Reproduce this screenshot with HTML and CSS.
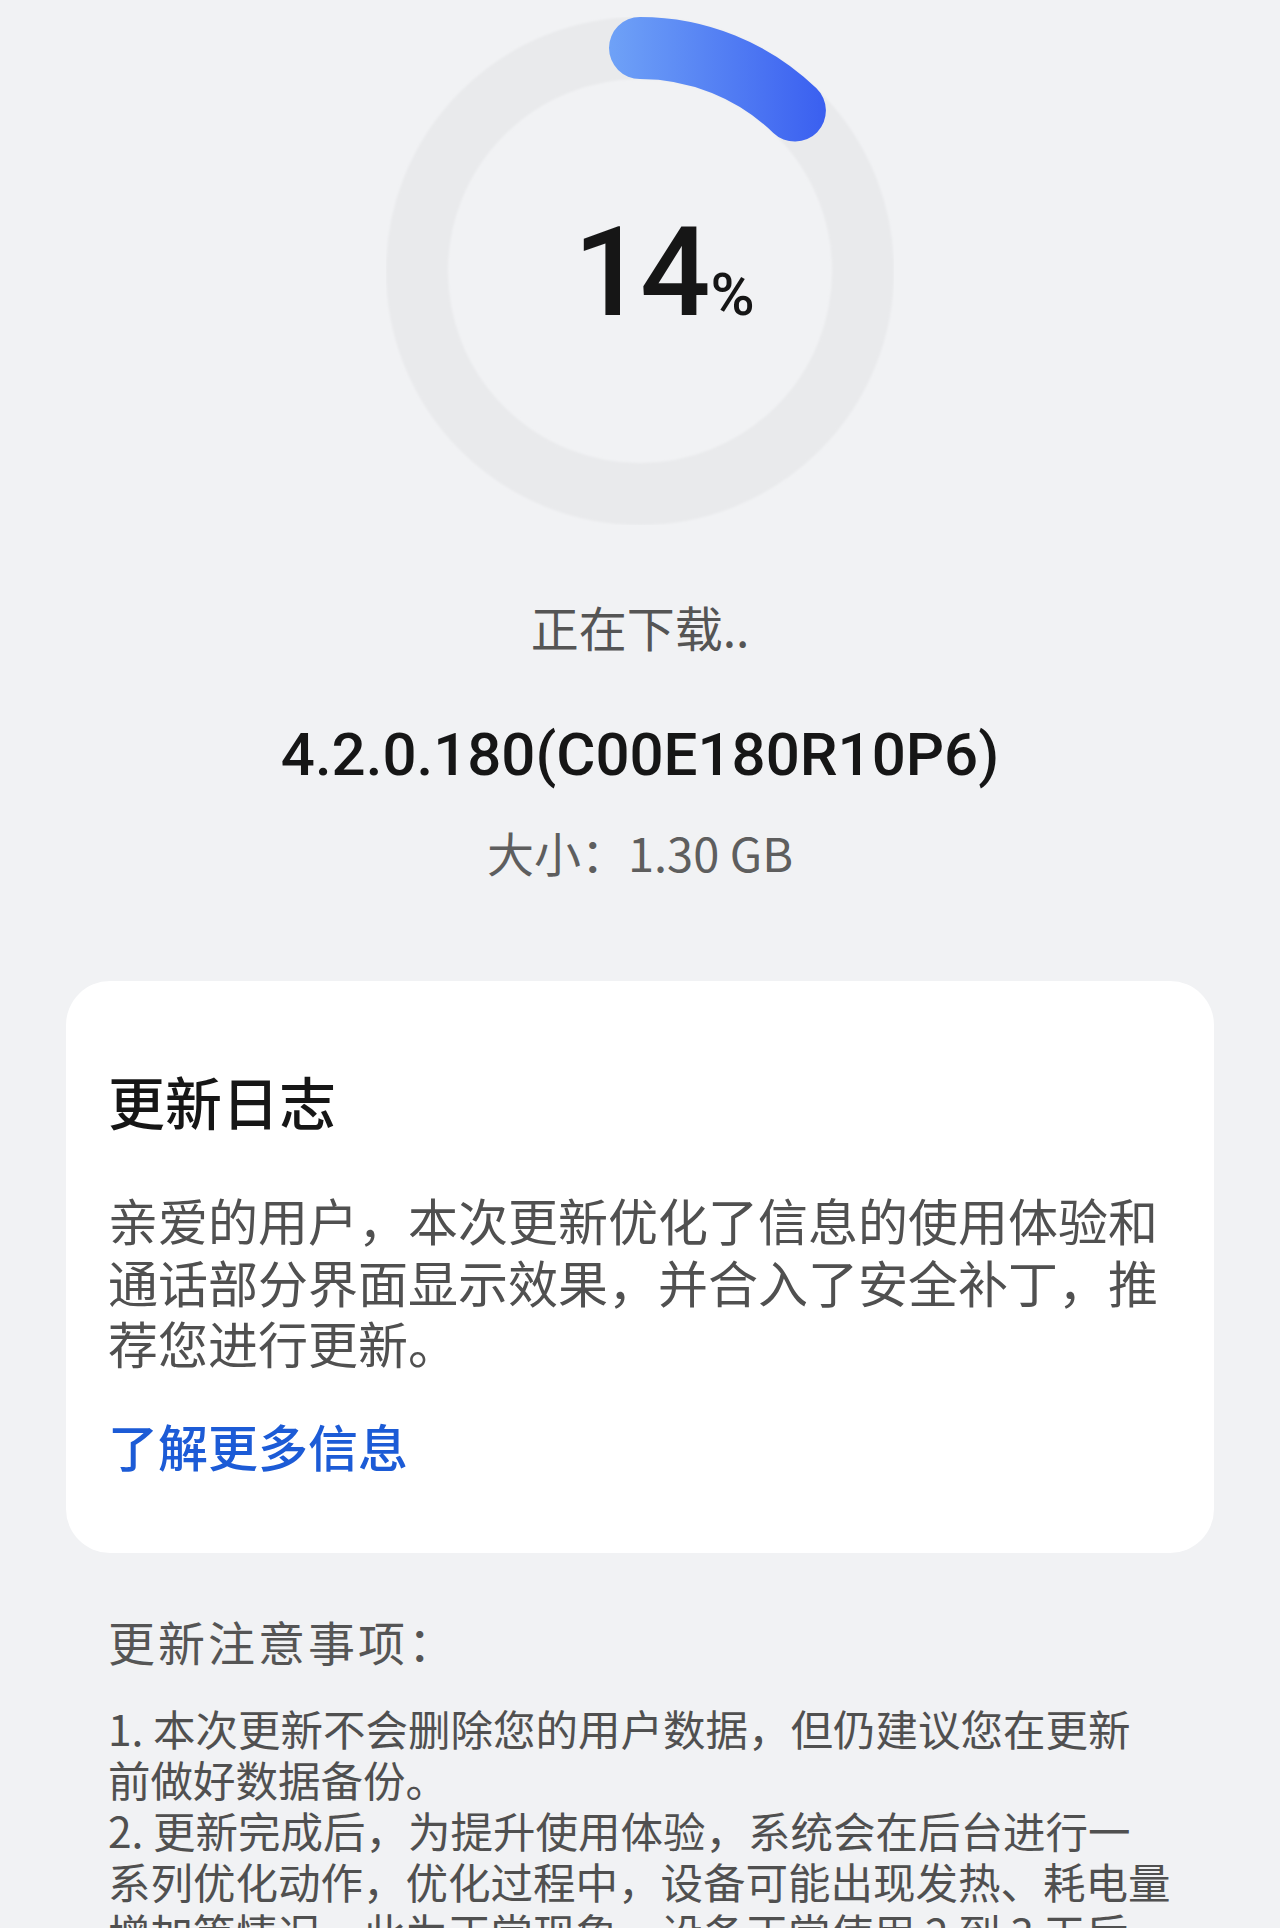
FILE: index.html
```html
<!DOCTYPE html>
<html lang="zh-CN">
<head>
<meta charset="utf-8">
<title>软件更新</title>
<link rel="stylesheet" href="styles.css">
</head>
<body>
<main class="page">
  <section class="progress">
    <svg class="progress-ring" viewBox="0 0 508 508" width="508" height="508" aria-hidden="true">
      <defs>
        <linearGradient id="arcGrad" gradientUnits="userSpaceOnUse" x1="222" y1="0" x2="440" y2="0">
          <stop offset="0" stop-color="#6fa2f7"/>
          <stop offset="1" stop-color="#3a5ff0"/>
        </linearGradient>
        <filter id="soft" x="-10%" y="-10%" width="120%" height="120%">
          <feGaussianBlur stdDeviation="1.2"/>
        </filter>
      </defs>
      <circle cx="254" cy="254" r="223" fill="none" stroke="#e9eaec" stroke-width="62" filter="url(#soft)"/>
      <path d="M254 31 A223 223 0 0 1 408.9 93.6" fill="none" stroke="url(#arcGrad)" stroke-width="62" stroke-linecap="round"/>
    </svg>
    <div class="progress-value"><span class="num">14</span><span class="unit">%</span></div>
  </section>

  <p class="status">正在下载..</p>
  <p class="version">4.2.0.180(C00E180R10P6)</p>
  <p class="size">大小：1.30 GB</p>

  <section class="card">
    <h2 class="card-title">更新日志</h2>
    <p class="card-body">亲爱的用户，本次更新优化了信息的使用体验和<br>通话部分界面显示效果，并合入了安全补丁，推<br>荐您进行更新。</p>
    <a class="card-link" href="#">了解更多信息</a>
  </section>

  <section class="notes">
    <h3 class="notes-title">更新注意事项：</h3>
    <p class="notes-item">1. 本次更新不会删除您的用户数据，但仍建议您在更新<br>前做好数据备份。</p>
    <p class="notes-item">2. 更新完成后，为提升使用体验，系统会在后台进行一<br>系列优化动作，优化过程中，设备可能出现发热、耗电量<br>增加等情况，此为正常现象，设备正常使用 2 到 3 天后</p>
  </section>
</main>
</body>
</html>
```

FILE: styles.css
```css
html, body {
  margin: 0;
  padding: 0;
  background: #f1f2f4;
}

body {
  font-family: "Noto Sans CJK SC", "Noto Sans", sans-serif;
  color: #1a1a1a;
}

.page {
  width: 1280px;
  height: 1928px;
  overflow: hidden;
}

p, h2, h3 {
  margin: 0;
}

.progress {
  width: 508px;
  height: 508px;
  margin: 17px auto 0;
  display: grid;
  place-items: center;
}

.progress-ring,
.progress-value {
  grid-area: 1 / 1;
}

.progress-ring {
  display: block;
}

.progress-value {
  font-family: Roboto, "Noto Sans", sans-serif;
  color: #161616;
  display: flex;
  align-items: baseline;
  line-height: 1;
  padding-top: 4px;
}

.progress-value .num {
  font-size: 124px;
  font-weight: 500;
  letter-spacing: -4px;
}

.progress-value .unit {
  font-size: 60px;
  font-weight: 500;
  margin-left: 4px;
  margin-right: -48px;
}

.status {
  margin-top: 71px;
  text-align: center;
  font-size: 48px;
  line-height: 60px;
  color: #555555;
}

.version {
  margin-top: 63px;
  text-align: center;
  font-family: Roboto, "Noto Sans", sans-serif;
  font-size: 60px;
  line-height: 72px;
  font-weight: 500;
  color: #161616;
  letter-spacing: 0;
}

.size {
  margin-top: 33px;
  text-align: center;
  font-size: 47px;
  line-height: 56px;
  color: #5e5e5e;
}

.card {
  margin: 101px 66px 0;
  background: #ffffff;
  border-radius: 44px;
  padding: 84px 40px 78px 42px;
}

.card-title {
  font-size: 57px;
  line-height: 70px;
  font-weight: 500;
  color: #161616;
}

.card-body {
  margin-top: 54px;
  font-size: 50px;
  line-height: 61.5px;
  color: #505050;
  white-space: nowrap;
}

.card-link {
  display: block;
  margin-top: 41px;
  font-size: 50px;
  line-height: 60px;
  font-weight: 500;
  color: #1c5bd6;
  text-decoration: none;
}

.notes {
  padding: 60px 66px 0 108px;
}

.notes-title {
  font-size: 47px;
  line-height: 56px;
  font-weight: 400;
  letter-spacing: 3px;
  color: #555555;
}

.notes-title + .notes-item {
  margin-top: 33px;
}

.notes-item {
  font-size: 42.5px;
  line-height: 51px;
  color: #505050;
  white-space: nowrap;
}
```
